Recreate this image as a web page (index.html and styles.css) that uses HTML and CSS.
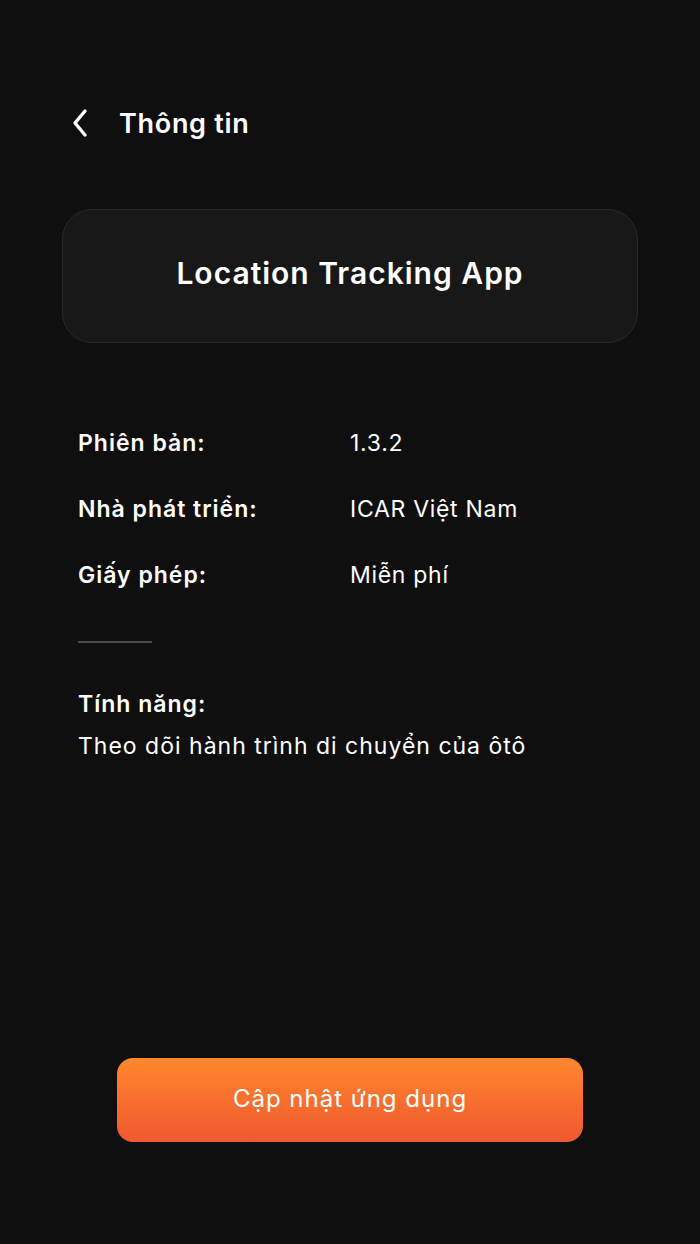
FILE: index.html
```html
<!DOCTYPE html>
<html lang="vi">
<head>
<meta charset="utf-8">
<title>Thông tin</title>
<link rel="stylesheet" href="styles.css">
</head>
<body>
<div class="screen">
  <header class="topbar">
    <button class="back" aria-label="Quay lại">
      <svg width="18" height="30" viewBox="0 0 18 30" fill="none"><path d="M14 3 L4 15 L14 27" stroke="#ffffff" stroke-width="3.4" stroke-linecap="round" stroke-linejoin="round"/></svg>
    </button>
    <h1 class="title">Thông tin</h1>
  </header>

  <section class="card">
    <h2 class="app-name">Location Tracking App</h2>
  </section>

  <dl class="info">
    <div class="row"><dt>Phiên bản:</dt><dd>1.3.2</dd></div>
    <div class="row"><dt>Nhà phát triển:</dt><dd>ICAR Việt Nam</dd></div>
    <div class="row"><dt>Giấy phép:</dt><dd>Miễn phí</dd></div>
  </dl>

  <hr class="divider">

  <section class="features">
    <h3 class="features-title">Tính năng:</h3>
    <p class="features-text">Theo dõi hành trình di chuyển của ôtô</p>
  </section>

  <div class="bottom">
    <button class="update">Cập nhật ứng dụng</button>
  </div>
</div>
</body>
</html>
```
FILE: styles.css
```css
* { box-sizing: border-box; }
html, body { margin: 0; padding: 0; }
body {
  background: #0f0f0f;
  color: #ffffff;
  font-family: "Inter", "Open Sans", sans-serif;
}
.screen {
  min-height: 1244px;
  display: flex;
  flex-direction: column;
  padding: 99px 62px 102px;
}
.topbar {
  display: flex;
  align-items: center;
  height: 48px;
  gap: 26px;
  padding-left: 9px;
}
.back {
  background: none;
  border: 0;
  padding: 0;
  width: 22px;
  height: 30px;
  display: flex;
  align-items: center;
}
.title {
  margin: 0;
  font-size: 27px;
  font-weight: 600;
  letter-spacing: 0.7px;
}
.card {
  margin-top: 62px;
  height: 134px;
  padding-bottom: 6px;
  background: #181818;
  border: 1.5px solid #2a2a2a;
  border-radius: 30px;
  display: flex;
  align-items: center;
  justify-content: center;
}
.app-name {
  margin: 0;
  font-size: 30px;
  font-weight: 600;
  letter-spacing: 1px;
}
.info {
  margin: 67px 0 0;
  padding: 0 16px;
}
.row {
  display: flex;
  height: 66px;
  align-items: center;
  font-size: 23px;
}
.row dt {
  width: 272px;
  font-weight: 600;
  letter-spacing: 1px;
}
.row dd {
  margin: 0;
  font-weight: 400;
  letter-spacing: 0.7px;
}
.divider {
  margin: 33px 0 0 16px;
  width: 74px;
  height: 2px;
  border: 0;
  background: #4a4a4a;
}
.features {
  padding: 0 16px;
  margin-top: 45px;
}
.features-title {
  margin: 0;
  font-size: 23px;
  font-weight: 600;
  letter-spacing: 1px;
  line-height: 32px;
}
.features-text {
  margin: 10px 0 0;
  font-size: 23px;
  letter-spacing: 1px;
  line-height: 32px;
}
.bottom {
  margin-top: auto;
  display: flex;
  justify-content: center;
}
.update {
  width: 466px;
  height: 84px;
  padding-bottom: 5px;
  border: 0;
  border-radius: 16px;
  background: linear-gradient(180deg, #ff872d 0%, #f0582f 100%);
  color: #ffffff;
  font-family: inherit;
  font-size: 24px;
  font-weight: 400;
  letter-spacing: 1px;
}
```
